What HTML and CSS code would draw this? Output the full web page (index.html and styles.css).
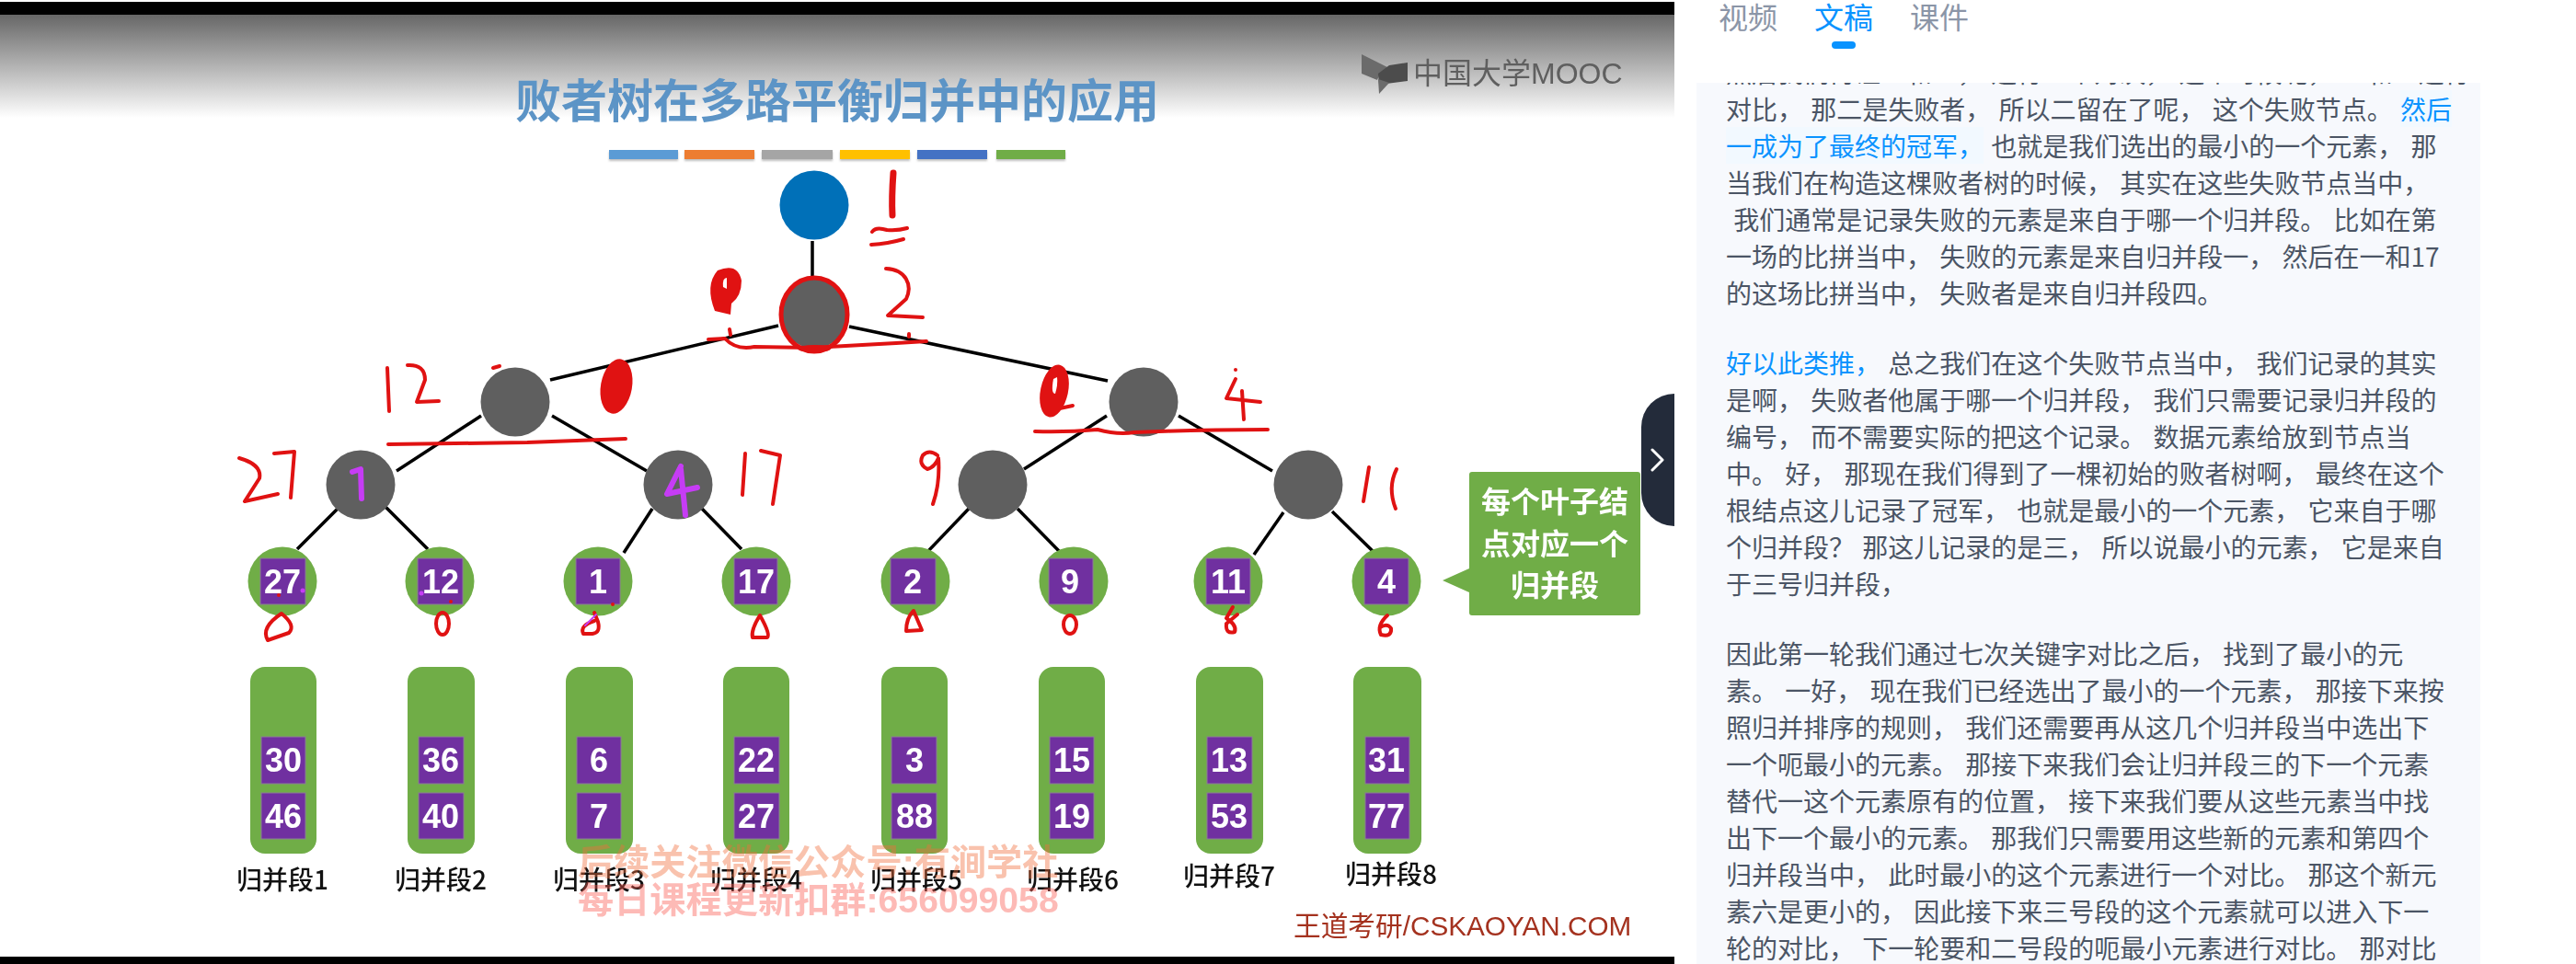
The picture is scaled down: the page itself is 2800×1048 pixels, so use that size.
FILE: index.html
```html
<!DOCTYPE html>
<html lang="en">

<head>
    <meta charset="UTF-8">
    <title>文稿</title>
    <link rel="stylesheet" href="styles.css">
</head>

<body>
    <div class="page">
        <div class="player">
            <svg class="frame" width="1820" height="1048" viewBox="0 0 1820 1048">
                <defs>
                    <linearGradient id="fade" x1="0" y1="0" x2="0" y2="1">
                        <stop offset="0" stop-color="#676767" />
                        <stop offset="1" stop-color="#ffffff" />
                    </linearGradient>
                </defs>
                <rect class="screen" x="0" y="2" width="1820" height="1046" />
                <rect class="letterbox" x="0" y="2" width="1820" height="14" />
                <rect class="letterbox" x="0" y="1040" width="1820" height="8" />
                <rect x="0" y="16" width="1820" height="112" fill="url(#fade)" />

                <text class="title" x="560" y="128">败者树在多路平衡归并中的应用</text>
                <g class="swatches">
                    <rect x="662" y="163" width="75" height="10" fill="#5b9bd5" />
                    <rect x="744" y="163" width="76" height="10" fill="#ed7d31" />
                    <rect x="828" y="163" width="77" height="10" fill="#a5a5a5" />
                    <rect x="913" y="163" width="76" height="10" fill="#ffc000" />
                    <rect x="997" y="163" width="76" height="10" fill="#4472c4" />
                    <rect x="1083" y="163" width="75" height="10" fill="#70ad47" />
                </g>

                <polygon class="logo-left" points="1480,59 1510,74 1500,80 1497,87 1480,80" />
                <polygon class="logo-right" points="1530,68 1530,88 1499,92 1498,80 1510,71" />
                <polygon class="logo-left" points="1498,86 1510,90 1499,102" />
                <text class="logo-text" x="1536" y="91">中国大学MOOC</text>

                <g class="edges">
                    <line x1="883" y1="262" x2="883" y2="302" />
                    <line x1="846" y1="354" x2="598" y2="413" />
                    <line x1="923" y1="355" x2="1204" y2="414" />
                    <line x1="523" y1="452" x2="431" y2="512" />
                    <line x1="600" y1="452" x2="703" y2="512" />
                    <line x1="1203" y1="452" x2="1113" y2="510" />
                    <line x1="1281" y1="452" x2="1383" y2="512" />
                    <line x1="367" y1="553" x2="323" y2="597" />
                    <line x1="419" y1="551" x2="465" y2="597" />
                    <line x1="709" y1="553" x2="678" y2="601" />
                    <line x1="763" y1="553" x2="806" y2="597" />
                    <line x1="1053" y1="553" x2="1009" y2="599" />
                    <line x1="1106" y1="553" x2="1151" y2="599" />
                    <line x1="1395" y1="557" x2="1363" y2="603" />
                    <line x1="1448" y1="556" x2="1492" y2="599" />
                </g>

                <circle class="winner" cx="885" cy="223" r="37.5" />
                <g class="loser">
                    <circle cx="885" cy="341" r="37.5" />
                    <circle cx="560" cy="437" r="37.5" />
                    <circle cx="1243" cy="437" r="37.5" />
                    <circle cx="392" cy="527" r="37.5" />
                    <circle cx="737" cy="527" r="37.5" />
                    <circle cx="1079" cy="527" r="37.5" />
                    <circle cx="1422" cy="527" r="37.5" />
                </g>

                <g class="leaf">
                    <circle cx="307" cy="632" r="37.5" />
                    <circle cx="478" cy="632" r="37.5" />
                    <circle cx="650" cy="632" r="37.5" />
                    <circle cx="822" cy="632" r="37.5" />
                    <circle cx="995" cy="632" r="37.5" />
                    <circle cx="1167" cy="632" r="37.5" />
                    <circle cx="1335" cy="632" r="37.5" />
                    <circle cx="1507" cy="632" r="37.5" />
                </g>
                <g class="cell">
                    <rect x="283" y="607" width="49" height="50" />
                    <rect x="454" y="607" width="49" height="50" />
                    <rect x="626" y="607" width="48" height="50" />
                    <rect x="798" y="607" width="47" height="50" />
                    <rect x="968" y="607" width="49" height="50" />
                    <rect x="1140" y="607" width="48" height="50" />
                    <rect x="1311" y="607" width="48" height="50" />
                    <rect x="1483" y="607" width="48" height="50" />
                </g>
                <g class="num">
                    <text x="307" y="645">27</text>
                    <text x="479" y="645">12</text>
                    <text x="650" y="645">1</text>
                    <text x="822" y="645">17</text>
                    <text x="992" y="645">2</text>
                    <text x="1163" y="645">9</text>
                    <text x="1335" y="645">11</text>
                    <text x="1507" y="645">4</text>
                </g>

                <g class="run">
                    <rect x="272" y="725" width="72" height="203" rx="16" />
                    <rect x="443" y="725" width="73" height="203" rx="16" />
                    <rect x="615" y="725" width="73" height="203" rx="16" />
                    <rect x="786" y="725" width="72" height="203" rx="16" />
                    <rect x="958" y="725" width="72" height="203" rx="16" />
                    <rect x="1129" y="725" width="72" height="203" rx="16" />
                    <rect x="1300" y="725" width="73" height="203" rx="16" />
                    <rect x="1471" y="725" width="74" height="203" rx="16" />
                </g>
                <g class="cell">
                    <rect x="284" y="801" width="48" height="51" />
                    <rect x="284" y="862" width="48" height="50" />
                    <rect x="455" y="801" width="49" height="51" />
                    <rect x="455" y="862" width="49" height="50" />
                    <rect x="627" y="801" width="48" height="51" />
                    <rect x="627" y="862" width="48" height="50" />
                    <rect x="798" y="801" width="49" height="51" />
                    <rect x="798" y="862" width="49" height="50" />
                    <rect x="969" y="801" width="49" height="51" />
                    <rect x="969" y="862" width="49" height="50" />
                    <rect x="1141" y="801" width="48" height="51" />
                    <rect x="1141" y="862" width="48" height="50" />
                    <rect x="1312" y="801" width="49" height="51" />
                    <rect x="1312" y="862" width="49" height="50" />
                    <rect x="1484" y="801" width="48" height="51" />
                    <rect x="1484" y="862" width="48" height="50" />
                </g>
                <g class="num">
                    <text x="308" y="839">30</text>
                    <text x="308" y="900">46</text>
                    <text x="479" y="839">36</text>
                    <text x="479" y="900">40</text>
                    <text x="651" y="839">6</text>
                    <text x="651" y="900">7</text>
                    <text x="822" y="839">22</text>
                    <text x="822" y="900">27</text>
                    <text x="994" y="839">3</text>
                    <text x="994" y="900">88</text>
                    <text x="1165" y="839">15</text>
                    <text x="1165" y="900">19</text>
                    <text x="1336" y="839">13</text>
                    <text x="1336" y="900">53</text>
                    <text x="1507" y="839">31</text>
                    <text x="1507" y="900">77</text>
                </g>

                <g class="run-label">
                    <text x="307" y="967">归并段1</text>
                    <text x="479" y="967">归并段2</text>
                    <text x="651" y="967">归并段3</text>
                    <text x="822" y="967">归并段4</text>
                    <text x="996" y="967">归并段5</text>
                    <text x="1166" y="967">归并段6</text>
                    <text x="1336" y="963">归并段7</text>
                    <text x="1512" y="961">归并段8</text>
                </g>

                <text class="mark mark-top" x="628" y="951">后续关注微信公众号:有涧学社</text>
                <text class="mark mark-low" x="628" y="992">每日课程更新扣群:656099058</text>
                <text class="credit" x="1406" y="1017">王道考研/CSKAOYAN.COM</text>

                <path class="bubble" d="M1600 513 H1780 Q1783 513 1783 516 V666 Q1783 669 1780 669 H1600 Q1597 669 1597 666 V644 L1568 631 L1597 618 V516 Q1597 513 1600 513 Z" />
                <g class="bubble-text">
                    <text x="1690" y="557">每个叶子结</text>
                    <text x="1690" y="603">点对应一个</text>
                    <text x="1690" y="648">归并段</text>
                </g>

                <!-- pen marks -->
                <g class="pen">
                    <path class="thick" d="M971 188 Q969 215 970 234" />
                    <path d="M948 252 Q952 246 964 250 Q976 251 986 248 M947 266 Q965 265 982 260" />
                    <path d="M963 292 C985 293 992 310 985 325 L965 343 L1003 345" />
                    <ellipse class="ring" cx="885" cy="342" rx="36" ry="40" />
                    <path d="M770 369 L788 368 Q800 381 820 377 L880 378 Q940 375 1007 371" />
                    <path d="M793 358 L794 364 M988 363 L988 366" />
                    <path d="M421 400 L423 447" />
                    <path d="M443 397 Q462 396 462 413 L453 437 L477 436" />
                    <path d="M536 400 L543 398" />
                    <path d="M422 483 L573 481 L680 477" />
                    <path d="M260 498 Q285 505 282 520 L266 545 L302 537" />
                    <path d="M298 493 L320 491 L316 541" />
                    <path d="M810 493 L807 538" />
                    <path d="M827 490 L848 495 L840 548" />
                    <path d="M1019 495 Q1010 488 1003 495 Q998 505 1008 510 Q1016 508 1020 498 Q1022 525 1014 548" />
                    <path d="M1125 469 Q1160 470 1193 467 Q1215 473 1233 470 Q1300 467 1378 467" />
                    <path d="M1343 412 L1333 433 L1370 437 M1350 425 L1352 456" />
                    <path d="M1488 508 L1482 545" />
                    <path d="M1518 510 Q1508 530 1517 553" />
                    <path d="M1147 445 L1166 441" />
                    <path d="M306 667 Q322 680 314 688 L291 696 Q283 682 306 667 Z" />
                    <ellipse cx="481" cy="678" rx="7" ry="12" />
                    <path d="M646 666 L650 676 Q653 688 644 689 L634 689 Q630 680 646 675" />
                    <path d="M826 669 Q838 690 834 693 L818 693 Q816 685 826 669 Z" />
                    <path d="M993 664 L1002 685 L985 686 Q985 672 993 664 Z" />
                    <ellipse cx="1163" cy="679" rx="7" ry="10" />
                    <path d="M1340 660 L1333 672 Q1345 680 1342 687 Q1332 690 1333 678 L1345 668" />
                    <path d="M1508 669 Q1496 680 1501 690 Q1513 693 1512 683 Q1508 677 1500 682" />
                </g>
                <g class="pen-fill">
                    <path d="M780 294 Q802 285 806 305 Q806 322 795 330 L794 342 L777 338 Q766 310 780 294 Z" />
                    <ellipse cx="670" cy="420" rx="17" ry="30" transform="rotate(10 670 420)" />
                    <ellipse cx="1146" cy="425" rx="15" ry="29" transform="rotate(12 1146 425)" />
                    <ellipse cx="885" cy="379" rx="18" ry="4" />
                    <circle cx="303" cy="647" r="2" />
                    <circle cx="490" cy="654" r="2" />
                    <circle cx="666" cy="657" r="2" />
                    <circle cx="1343" cy="402" r="2" />
                </g>
                <g class="speck">
                    <path d="M786 312 Q785 302 790 302 L790 314 Z" />
                    <path d="M1145 412 Q1142 428 1147 428 Q1150 418 1149 410 Z" />
                </g>
                <g class="pen-purple">
                    <path d="M383 513 L392 510 L393 542" />
                    <path d="M740 507 L725 537 L758 530 M740 510 L745 560" />
                    <path class="streak" d="M636 680 L648 668" />
                </g>
                <g class="pen-purple-fill">
                    <circle cx="329" cy="642" r="2.5" />
                    <circle cx="458" cy="645" r="2.5" />
                </g>
            </svg>
            <button class="drawer-toggle">
                <svg width="16" height="26" viewBox="0 0 16 26">
                    <path d="M2 2 L13 13 L2 24" />
                </svg>
            </button>
        </div>

        <div class="side">
            <div class="tabs">
                <div class="tab">视频</div>
                <div class="tab active">文稿</div>
                <div class="tab">课件</div>
            </div>
            <div class="transcript">
                <div class="scroller">
                    <p>然后我们再让一和二， 进行一个对决， 这个时候呢， 一和二进行
对比， 那二是失败者， 所以二留在了呢， 这个失败节点。 <span class="current">然后
一成为了最终的冠军，</span> 也就是我们选出的最小的一个元素， 那
当我们在构造这棵败者树的时候， 其实在这些失败节点当中，
 我们通常是记录失败的元素是来自于哪一个归并段。 比如在第
一场的比拼当中， 失败的元素是来自归并段一， 然后在一和17
的这场比拼当中， 失败者是来自归并段四。</p>
                    <p><span class="said">好以此类推，</span> 总之我们在这个失败节点当中， 我们记录的其实
是啊， 失败者他属于哪一个归并段， 我们只需要记录归并段的
编号， 而不需要实际的把这个记录。 数据元素给放到节点当
中。 好， 那现在我们得到了一棵初始的败者树啊， 最终在这个
根结点这儿记录了冠军， 也就是最小的一个元素， 它来自于哪
个归并段？ 那这儿记录的是三， 所以说最小的元素， 它是来自
于三号归并段，</p>
                    <p>因此第一轮我们通过七次关键字对比之后， 找到了最小的元
素。 一好， 现在我们已经选出了最小的一个元素， 那接下来按
照归并排序的规则， 我们还需要再从这几个归并段当中选出下
一个呃最小的元素。 那接下来我们会让归并段三的下一个元素
替代一这个元素原有的位置， 接下来我们要从这些元素当中找
出下一个最小的元素。 那我们只需要用这些新的元素和第四个
归并段当中， 此时最小的这个元素进行一个对比。 那这个新元
素六是更小的， 因此接下来三号段的这个元素就可以进入下一
轮的对比， 下一轮要和二号段的呃最小元素进行对比。 那对比</p>
                </div>
            </div>
        </div>
    </div>
</body>

</html>
```

FILE: styles.css
```css
body {
    margin: 0;
    background-color: #fff;
    font-family: "Noto Sans CJK SC", "Noto Sans", sans-serif;
    overflow: hidden;
}

.page {
    display: flex;
    width: 2800px;
    height: 1048px;
}

/* video frame */
.player {
    position: relative;
    flex: 0 0 1820px;
    height: 1048px;
}

.frame {
    display: block;
    filter: blur(0.5px);
}

.screen {
    fill: #fff;
}

.letterbox {
    fill: #000;
}

.title {
    font-size: 50px;
    font-weight: 700;
    fill: #5c94c6;
}

.swatches {
    filter: drop-shadow(0 2px 1px rgba(0, 0, 0, 0.25));
}

.logo-left {
    fill: #6b6b6b;
}

.logo-right {
    fill: #4c4c4c;
}

.logo-text {
    font-family: "Liberation Sans", "Noto Sans CJK SC", sans-serif;
    font-size: 32px;
    fill: #5f5f5f;
}

.edges line {
    stroke: #000;
    stroke-width: 3.5;
}

.winner {
    fill: #0070b8;
}

.loser circle {
    fill: #5f5f5f;
}

.leaf circle,
.run rect {
    fill: #70ad47;
}

.cell rect {
    fill: #7030a0;
    stroke: #8b7d96;
    stroke-width: 1;
}

.num text {
    font-family: "Liberation Sans", sans-serif;
    font-size: 36px;
    font-weight: 700;
    fill: #fff;
    text-anchor: middle;
}

.run-label text {
    font-family: "Noto Sans CJK SC", sans-serif;
    font-size: 28px;
    font-weight: 500;
    fill: #111;
    text-anchor: middle;
}

.mark {
    font-family: "Liberation Sans", "Noto Sans CJK SC", sans-serif;
    font-size: 39.2px;
    font-weight: 700;
}

.mark-top {
    fill: rgba(240, 110, 60, 0.42);
}

.mark-low {
    fill: rgba(250, 90, 80, 0.42);
}

.credit {
    font-family: "Liberation Sans", "Noto Sans CJK SC", sans-serif;
    font-size: 29.7px;
    fill: #a4321f;
}

.bubble {
    fill: #70ad47;
}

.bubble-text text {
    font-size: 32px;
    font-weight: 700;
    fill: #fff;
    text-anchor: middle;
}

.pen path,
.pen ellipse {
    fill: none;
    stroke: #e01212;
    stroke-width: 4;
    stroke-linecap: round;
    stroke-linejoin: round;
}

.pen .thick {
    stroke-width: 7;
}

.pen .ring {
    stroke-width: 5;
}

.pen-fill {
    fill: #e01212;
}

.speck {
    fill: #fff;
}

.pen-purple path {
    fill: none;
    stroke: #c63cf5;
    stroke-width: 6;
    stroke-linecap: round;
    stroke-linejoin: round;
}

.pen-purple .streak {
    stroke-width: 2;
}

.pen-purple-fill {
    fill: #c63cf5;
}

.drawer-toggle {
    position: absolute;
    top: 428px;
    right: 0;
    display: flex;
    align-items: center;
    justify-content: center;
    width: 36px;
    height: 144px;
    padding: 0;
    border: none;
    border-radius: 36px 0 0 36px;
    background-color: #232b3a;
}

.drawer-toggle path {
    fill: none;
    stroke: #fff;
    stroke-width: 3;
    stroke-linecap: round;
    stroke-linejoin: round;
}

/* right column */
.side {
    display: flex;
    flex-direction: column;
    flex: 1;
    height: 1048px;
    padding: 0 104px 0 24px;
    box-sizing: border-box;
}

.tabs {
    display: flex;
    flex: 0 0 90px;
    gap: 40px;
    padding-left: 24px;
}

.tab {
    position: relative;
    font-size: 32px;
    line-height: 34px;
    color: #8b95a7;
}

.tab.active {
    color: #0a93ff;
}

.tab.active::after {
    content: "";
    position: absolute;
    top: 45px;
    left: 19px;
    width: 26px;
    height: 8px;
    border-radius: 4px;
    background-color: #0a93ff;
}

.transcript {
    flex: 1;
    overflow: hidden;
    background-color: #f7f9fd;
}

.scroller {
    margin-top: -32px;
    padding-left: 32px;
}

.scroller p {
    margin: 0 0 36px;
    font-size: 28px;
    line-height: 40px;
    word-spacing: 2px;
    white-space: pre;
    color: #4b5565;
}

.current {
    background-color: #f2f9ff;
    color: #0a93ff;
}

.said {
    color: #0a93ff;
}
```
